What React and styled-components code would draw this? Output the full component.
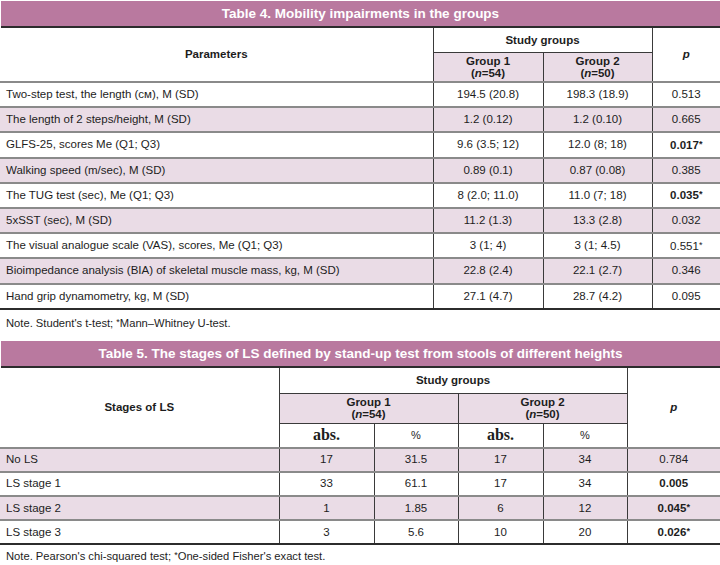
import React from "react";
import styled, { createGlobalStyle } from "styled-components";

const Global = createGlobalStyle`
  body {
    margin: 0;
    background: #fff;
    font-family: "Liberation Sans", Arial, sans-serif;
    color: #1d1d1d;
  }
`;

const PINK = "#eadce6";
const MAUVE = "#b9799f";

const Page = styled.div`
  width: 720px;
  padding-top: 1px;
`;

const Block = styled.section`
  margin-bottom: ${(p) => p.$gap || 0}px;
`;

const Title = styled.div`
  height: 25px;
  background: ${MAUVE};
  border-bottom: 2px solid #2c2c2c;
  color: #fff;
  font-weight: bold;
  font-size: 13.5px;
  display: flex;
  align-items: center;
  justify-content: center;
  margin-left: 1px;
`;

const Table = styled.table`
  width: 720px;
  border-collapse: collapse;
  table-layout: fixed;
  font-size: 11.5px;
  border-bottom: 2px solid #2c2c2c;
`;

const Row = styled.tr`
  background: ${(p) => (p.$shade ? PINK : "#fff")};
`;

const Head = styled.th`
  font-weight: bold;
  font-size: 11.5px;
  text-align: center;
  padding: 0 4px;
  line-height: 12.5px;
  height: ${(p) => p.$h || 24}px;
  background: ${(p) => (p.$shade ? PINK : "transparent")};
  border-left: ${(p) => (p.$noLeft ? "none" : "1px solid #3a3a3a")};
  border-top: ${(p) => (p.$top ? "1px solid #3a3a3a" : "none")};
`;

const Abs = styled.span`
  font-family: "Liberation Serif", "Times New Roman", serif;
  font-size: 16px;
  font-weight: bold;
  line-height: 13px;
`;

const Pct = styled.span`
  font-weight: normal;
  font-size: 11px;
`;

const Cell = styled.td`
  height: ${(p) => p.$h || 23.2}px;
  padding: 0 ${(p) => (p.$left ? "6px" : "4px")};
  text-align: ${(p) => (p.$left ? "left" : "center")};
  font-weight: ${(p) => (p.$bold ? "bold" : "normal")};
  border-left: ${(p) => (p.$left ? "none" : "1px solid #3a3a3a")};
  border-top: 2px solid #8a8a8a;
  white-space: nowrap;
  line-height: 13px;
`;

const Star = styled.span`
  font-size: 9px;
  vertical-align: 2px;
`;

const Note = styled.p`
  margin: 0;
  padding: ${(p) => p.$pt ?? 6}px 6px 0;
  font-size: 11.2px;
  line-height: 13px;
  height: ${(p) => p.$h || 28}px;
  box-sizing: border-box;
`;

function Val({ v }) {
  if (v.endsWith("*")) {
    return (
      <>
        {v.slice(0, -1)}
        <Star>*</Star>
      </>
    );
  }
  return v;
}

const mobility = [
  ["Two-step test, the length (см), M (SD)", "194.5 (20.8)", "198.3 (18.9)", "0.513"],
  ["The length of 2 steps/height, M (SD)", "1.2 (0.12)", "1.2 (0.10)", "0.665"],
  ["GLFS-25, scores Me (Q1; Q3)", "9.6 (3.5; 12)", "12.0 (8; 18)", "0.017*", true],
  ["Walking speed (m/sec), M (SD)", "0.89 (0.1)", "0.87 (0.08)", "0.385"],
  ["The TUG test (sec), Me (Q1; Q3)", "8 (2.0; 11.0)", "11.0 (7; 18)", "0.035*", true],
  ["5xSST (sec), M (SD)", "11.2 (1.3)", "13.3 (2.8)", "0.032"],
  ["The visual analogue scale (VAS), scores, Me (Q1; Q3)", "3 (1; 4)", "3 (1; 4.5)", "0.551*"],
  ["Bioimpedance analysis (BIA) of skeletal muscle mass, kg, M (SD)", "22.8 (2.4)", "22.1 (2.7)", "0.346"],
  ["Hand grip dynamometry, kg, M (SD)", "27.1 (4.7)", "28.7 (4.2)", "0.095"],
];

const stages = [
  ["No LS", "17", "31.5", "17", "34", "0.784"],
  ["LS stage 1", "33", "61.1", "17", "34", "0.005", true],
  ["LS stage 2", "1", "1.85", "6", "12", "0.045*", true],
  ["LS stage 3", "3", "5.6", "10", "20", "0.026*", true],
];

function GroupLabel({ num, n }) {
  return (
    <>
      Group {num}
      <br />(<i>n</i>={n})
    </>
  );
}

export default function App() {
  return (
    <Page>
      <Global />
      <Block $gap={3}>
        <Title>Table 4. Mobility impairments in the groups</Title>
        <Table>
          <colgroup>
            <col style={{ width: 433 }} />
            <col style={{ width: 110 }} />
            <col style={{ width: 109 }} />
            <col />
          </colgroup>
          <thead>
            <tr>
              <Head rowSpan={2} $noLeft>Parameters</Head>
              <Head colSpan={2} $h={24}>Study groups</Head>
              <Head rowSpan={2}>
                <i>p</i>
              </Head>
            </tr>
            <tr>
              <Head $shade $top $h={28}>
                <GroupLabel num={1} n={54} />
              </Head>
              <Head $shade $top $h={28}>
                <GroupLabel num={2} n={50} />
              </Head>
            </tr>
          </thead>
          <tbody>
            {mobility.map(([name, a, b, p, bold], i) => (
              <Row key={name} $shade={i % 2 === 1}>
                <Cell $left>{name}</Cell>
                <Cell>{a}</Cell>
                <Cell>{b}</Cell>
                <Cell $bold={bold}>
                  <Val v={p} />
                </Cell>
              </Row>
            ))}
          </tbody>
        </Table>
        <Note>
          Note. Student's t-test; <Star>*</Star>Mann–Whitney U-test.
        </Note>
      </Block>

      <Block>
        <Title>Table 5. The stages of LS defined by stand-up test from stools of different heights</Title>
        <Table>
          <colgroup>
            <col style={{ width: 279 }} />
            <col style={{ width: 95 }} />
            <col style={{ width: 84 }} />
            <col style={{ width: 85 }} />
            <col style={{ width: 84 }} />
            <col />
          </colgroup>
          <thead>
            <tr>
              <Head rowSpan={3} $noLeft>Stages of LS</Head>
              <Head colSpan={4} $h={25}>Study groups</Head>
              <Head rowSpan={3}>
                <i>p</i>
              </Head>
            </tr>
            <tr>
              <Head colSpan={2} $shade $top $h={29}>
                <GroupLabel num={1} n={54} />
              </Head>
              <Head colSpan={2} $shade $top $h={29}>
                <GroupLabel num={2} n={50} />
              </Head>
            </tr>
            <tr>
              <Head $top $h={23}>
                <Abs>abs.</Abs>
              </Head>
              <Head $top $h={23}>
                <Pct>%</Pct>
              </Head>
              <Head $top $h={23}>
                <Abs>abs.</Abs>
              </Head>
              <Head $top $h={23}>
                <Pct>%</Pct>
              </Head>
            </tr>
          </thead>
          <tbody>
            {stages.map(([name, a1, p1, a2, p2, p, bold], i) => (
              <Row key={name} $shade={i % 2 === 0}>
                <Cell $left $h={22.2}>{name}</Cell>
                <Cell $h={22.2}>{a1}</Cell>
                <Cell $h={22.2}>{p1}</Cell>
                <Cell $h={22.2}>{a2}</Cell>
                <Cell $h={22.2}>{p2}</Cell>
                <Cell $h={22.2} $bold={bold}>
                  <Val v={p} />
                </Cell>
              </Row>
            ))}
          </tbody>
        </Table>
        <Note $h={18} $pt={4}>
          Note. Pearson's chi-squared test; <Star>*</Star>One-sided Fisher's exact test.
        </Note>
      </Block>
    </Page>
  );
}
